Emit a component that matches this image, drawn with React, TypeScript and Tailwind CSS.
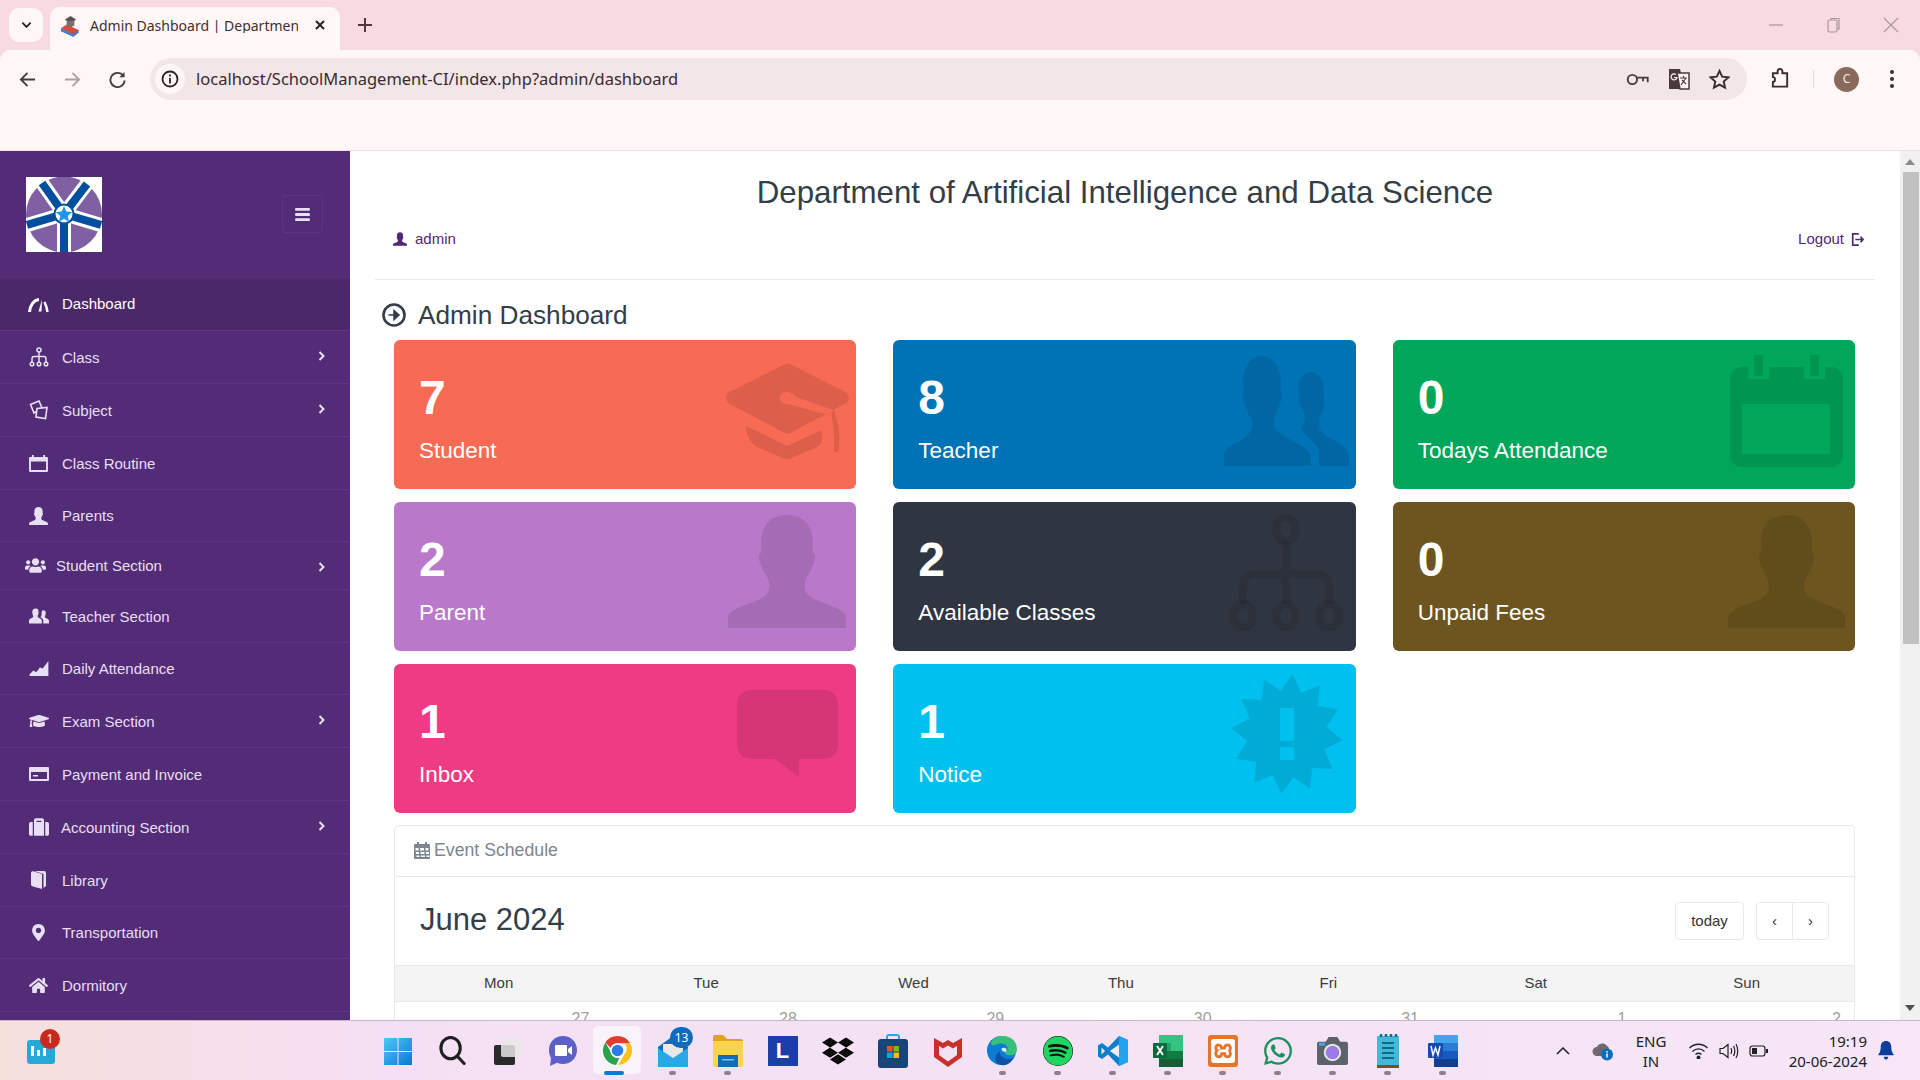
import { ReactNode } from 'react';
import { FaDropbox, FaGraduationCap, FaHome, FaMapMarkerAlt, FaSpotify, FaSuitcase, FaUsers, FaWhatsapp } from 'react-icons/fa';
import { SiXampp } from 'react-icons/si';

const person = 'M59 0C75 0 85 10 85 28C85 32 84 36 85 38C88 38 88 46 84 52C82 58 80 60 78 64C76 68 76 76 80 80C88 88 118 92 118 102V113H0V102C0 92 30 88 38 80C42 76 42 68 40 64C38 60 36 58 34 52C30 46 30 38 33 38C34 36 33 32 33 28C33 10 43 0 59 0Z';

// sidebar icons
const Gauge = () => (
  <svg viewBox="0 0 21 16" className="w-[21px] h-[16px]" fill="none" stroke="currentColor">
    <path d="M1.500 15C2 8 6 3 11 2.500" strokeWidth="3" />
    <path d="M14 2.500l-3.500 12h3z" fill="currentColor" stroke="none" />
    <path d="M16.500 5C18 8 19 11 19.500 15" strokeWidth="2.500" />
  </svg>
);

const FlowTree = () => (
  <svg viewBox="0 0 20 20" className="w-[20px] h-[20px]" fill="none" stroke="currentColor" strokeWidth="1.500">
    <circle cx="10" cy="3" r="2" />
    <circle cx="3" cy="17" r="1.800" />
    <circle cx="10" cy="17" r="1.800" />
    <circle cx="17" cy="17" r="1.800" />
    <path d="M10 5v10M3 15v-3c0-2 1-2.500 2-2.500h10c1 0 2 .5 2 2.500v3" />
  </svg>
);

const Docs = () => (
  <svg viewBox="0 0 20 20" className="w-[20px] h-[20px]" fill="none" stroke="currentColor" strokeWidth="1.600">
    <path d="M1.500 4.500L10 1l3 7-8 5z" />
    <path d="M8 8.500l10-1-1.500 11-9.500-1.500z" fill="#532c77" />
  </svg>
);

const CalendarSmall = () => (
  <svg viewBox="0 0 20 18" className="w-[19px] h-[17px]" fill="currentColor">
    <path fillRule="evenodd" d="M1 2h2V0h2v2h10V0h2v2h2a1 1 0 0 1 1 1v14a1 1 0 0 1-1 1H1a1 1 0 0 1-1-1V3a1 1 0 0 1 1-1zm1 5v9h16V7z" />
  </svg>
);

const Bust = ({ box, fill }: { box: string; fill: string }) => (
  <svg viewBox="0 0 118 113" className={box} fill={fill}>
    <path d={person} />
  </svg>
);

const Teachers = () => (
  <svg viewBox="0 0 21 16" className="w-[20px] h-[16px]" fill="currentColor">
    <path d="M7 0c2.500 0 3.500 2 3 5-.3 2-1 2.500-1 3.500 0 1.500 4.500 2 4.500 4.500v3H0v-3c0-2.500 4.500-3 4.500-4.500 0-1-.7-1.500-1-3.500C3 2 4.500 0 7 0z" />
    <path d="M15 2c2 0 3 1.500 2.500 4-.3 1.500-.8 2-.8 3 0 1.200 4.300 1.800 4.300 4v3h-6v-3c0-1.500-1-2.500-3-3.700.6-.8 1-1.500 1.200-3C13 4 13.500 2 15 2z" />
  </svg>
);

const AreaChart = () => (
  <svg viewBox="0 0 20 16" className="w-[20px] h-[15px]" fill="currentColor">
    <path d="M0 16v-2l4-4 3 2 4-5 3 1 6-8v16z" />
  </svg>
);

const CreditCard = () => (
  <svg viewBox="0 0 20 14" className="w-[20px] h-[14px]" fill="currentColor">
    <path fillRule="evenodd" d="M1 0h18a1 1 0 0 1 1 1v12a1 1 0 0 1-1 1H1a1 1 0 0 1-1-1V1a1 1 0 0 1 1-1zm1 5v7h16V5zm2 3h5v1.500H4z" />
  </svg>
);

const Book = () => (
  <svg viewBox="0 0 15 18" className="w-[15px] h-[18px]" fill="currentColor">
    <path d="M0 2C0 .5 1.500 0 3 .5L11 3v15l-9-2.500C.5 15 0 14.500 0 13z" />
    <path d="M3.500 0H13a2 2 0 0 1 2 2v13l-2.500 2V3z" />
  </svg>
);

const navItems: { label: string; icon: ReactNode; pad: string; gap: string; arrow?: string; h: string }[] = [
  { label: 'Class', icon: <FlowTree />, pad: 'pl-[28px]', gap: 'ml-[13px]', arrow: 'mb-[2px]', h: 'h-[53px]' },
  { label: 'Subject', icon: <Docs />, pad: 'pl-[28px]', gap: 'ml-[13px]', arrow: 'mb-[2px]', h: 'h-[53px]' },
  { label: 'Class Routine', icon: <CalendarSmall />, pad: 'pl-[28px]', gap: 'ml-[13px]', h: 'h-[53px]' },
  { label: 'Parents', icon: <Bust box="w-[19px] h-[18px]" fill="currentColor" />, pad: 'pl-[28px]', gap: 'ml-[13px]', h: 'h-[52px]' },
  { label: 'Student Section', icon: <FaUsers size={21} />, pad: 'pl-[25px]', gap: 'ml-[10px]', arrow: 'mt-[2px]', h: 'h-[48px]' },
  { label: 'Teacher Section', icon: <Teachers />, pad: 'pl-[28px]', gap: 'ml-[13px]', h: 'h-[53px]' },
  { label: 'Daily Attendance', icon: <AreaChart />, pad: 'pl-[28px]', gap: 'ml-[13px]', h: 'h-[52px]' },
  { label: 'Exam Section', icon: <FaGraduationCap size={20} />, pad: 'pl-[28px]', gap: 'ml-[13px]', arrow: 'mb-[2px]', h: 'h-[53px]' },
  { label: 'Payment and Invoice', icon: <CreditCard />, pad: 'pl-[28px]', gap: 'ml-[13px]', h: 'h-[53px]' },
  { label: 'Accounting Section', icon: <FaSuitcase size={20} />, pad: 'pl-[28px]', gap: 'ml-[12px]', arrow: 'mb-[2px]', h: 'h-[53px]' },
  { label: 'Library', icon: <Book />, pad: 'pl-[28px]', gap: 'ml-[13px]', h: 'h-[53px]' },
  { label: 'Transportation', icon: <FaMapMarkerAlt size={17} />, pad: 'pl-[28px]', gap: 'ml-[13px]', h: 'h-[52px]' },
  { label: 'Dormitory', icon: <FaHome size={19} />, pad: 'pl-[28px]', gap: 'ml-[13px]', h: 'h-[53px]' },
];

const Logo = () => (
  <svg viewBox="0 0 76 75" className="w-[76px] h-[75px] bg-white">
    <circle cx="38" cy="37.500" r="38" fill="#7f60a3" />
    <g stroke="#fff" strokeWidth="14">
      <path d="M38 37L14 3M38 37L63 4M38 37L-2 49M38 37L78 49M38 37V78" />
    </g>
    <g stroke="#004f9f" strokeWidth="8">
      <path d="M38 37L16 6M38 37L61 7M38 37L1 48M38 37L75 48M38 37V75" />
    </g>
    <circle cx="38" cy="37" r="10.500" fill="#004f9f" />
    <circle cx="38" cy="37" r="8.500" fill="#fff" />
    <path d="M38 29l2.300 5.600 6 .5-4.600 3.900 1.400 5.900-5.100-3.200-5.100 3.200 1.400-5.900-4.600-3.900 6-.5z" fill="#1e96f0" />
  </svg>
);

// big faded card icons, box sizes are taken from the picture
const BigPerson = ({ box }: { box: string }) => (
  <svg viewBox="0 0 118 113" className={box} preserveAspectRatio="none" fill="#000" fillOpacity="0.1">
    <path d={person} />
  </svg>
);

const BigCap = () => (
  <svg viewBox="0 0 125 96" className="absolute left-[331px] top-[23px] w-[125px] h-[96px]" fill="#000" fillOpacity="0.1">
    <path fillRule="evenodd" d="M58 2Q62.500-1 67 2L122 30Q126 35 122 40L108 47L101 51L67 69Q62.500 72 58 69L3 40Q-1 35 3 30ZM61 29C57 29 55 32 55 35C55 38 57 41 61 41C63 41 65 41 66 42L100 51L108 47L71 34C69 31 65 29 61 29Z" />
    <path d="M21 63L62 83L97 67V76C97 80 95 82 92 84L67 95Q62.500 97 58 95L32 84C25 80 21 72 21 63Z" />
    <path d="M109 47Q116 66 114 87C113 90 109 90 109 87Q110 68 106 50Z" />
  </svg>
);

const BigTeachers = () => (
  <svg viewBox="0 0 125 110" className="absolute left-[331px] top-[16px] w-[125px] h-[110px]" fill="#000" fillOpacity="0.1">
    <path d="M38 0C47 0 57 8 57 28C57 32 56 36 57 38C58 38 58 44 56 48C54 54 51 58 50 64C49 68 50 72 55 76C68 86 87 92 87 100V110H0V98C0 90 20 86 26 76C29 72 29 66 27 62C24 58 22 54 21 48C18 44 18 38 20 38C20 34 19 32 19 28C19 8 28 0 38 0Z" />
    <path d="M87 16C94 16 100 22 100 38C100 40 99 44 100 46C101 46 101 50 99 54C97 58 95 62 95 66C95 72 97 76 102 80C109 84 125 90 125 100V110H95V98C95 88 85 84 76 72C80 68 84 62 78 52C74 48 74 42 76 42C76 40 74 38 74 34C74 22 80 16 87 16Z" />
  </svg>
);

const BigCalendar = () => (
  <svg viewBox="0 0 113 112" className="absolute left-[337px] top-[15px] w-[113px] h-[112px]" fill="#000" fillOpacity="0.1">
    <path fillRule="evenodd" d="M12 12H18.500V24H39V12H74V24H95V12H101A12 12 0 0 1 113 24V100A12 12 0 0 1 101 112H12A12 12 0 0 1 0 100V24A12 12 0 0 1 12 12ZM12 49V99H100V49Z" />
    <rect x="24" y="0" width="9" height="21" />
    <rect x="80" y="0" width="9" height="21" />
  </svg>
);

const BigTree = () => (
  <svg viewBox="0 0 117 117" className="absolute left-[336px] top-[12px] w-[117px] h-[117px]" fill="none" stroke="#000" strokeOpacity="0.1" strokeWidth="8">
    <ellipse cx="57" cy="15" rx="10" ry="12" />
    <ellipse cx="14" cy="102" rx="10" ry="12" />
    <ellipse cx="57" cy="102" rx="10" ry="12" />
    <ellipse cx="100" cy="102" rx="10" ry="12" />
    <path d="M57 27V90M14 90V75C14 62 20 60 26 60H88C94 60 100 62 100 75V90" />
  </svg>
);

const BigSpeech = () => (
  <svg viewBox="0 0 101 87" className="absolute left-[343px] top-[26px] w-[101px] h-[87px]" fill="#000" fillOpacity="0.1">
    <path d="M14 0H87A14 14 0 0 1 101 14V55A14 14 0 0 1 87 69H62V87L38 69H14A14 14 0 0 1 0 55V14A14 14 0 0 1 14 0Z" />
  </svg>
);

const burstPath = (() => {
  const n = 12;
  let d = '';
  for (let i = 0; i < n; i++) {
    const a = (i / n) * Math.PI * 2 - Math.PI / 2 + 0.1;
    const b = ((i + 0.5) / n) * Math.PI * 2 - Math.PI / 2 + 0.1;
    const tip = `${(56 + 56 * Math.cos(a)).toFixed(1)} ${(60 + 60 * Math.sin(a)).toFixed(1)}`;
    const val = `${(56 + 40 * Math.cos(b)).toFixed(1)} ${(60 + 44 * Math.sin(b)).toFixed(1)}`;
    d += `${i === 0 ? 'M' : 'L'}${tip}L${val}`;
  }
  return d + 'Z';
})();

const BigBurst = () => (
  <svg viewBox="0 0 112 120" className="absolute left-[338px] top-[10px] w-[112px] h-[120px]" fill="#000" fillOpacity="0.1">
    <path fillRule="evenodd" d={`${burstPath}M49 34V67H63V34ZM49 73V86H63V73Z`} />
  </svg>
);

const cards = [
  { value: '7', label: 'Student', bg: 'bg-[#f76a54]', icon: <BigCap /> },
  { value: '8', label: 'Teacher', bg: 'bg-[#0073b7]', icon: <BigTeachers /> },
  { value: '0', label: 'Todays Attendance', bg: 'bg-[#00a65a]', icon: <BigCalendar /> },
  { value: '2', label: 'Parent', bg: 'bg-[#b978ca]', icon: <BigPerson box="absolute left-[334px] top-[13px] w-[118px] h-[113px]" /> },
  { value: '2', label: 'Available Classes', bg: 'bg-[#303641]', icon: <BigTree /> },
  { value: '0', label: 'Unpaid Fees', bg: 'bg-[#6d551f]', icon: <BigPerson box="absolute left-[335px] top-[13px] w-[117px] h-[113px]" /> },
  { value: '1', label: 'Inbox', bg: 'bg-[#ef3b84]', icon: <BigSpeech /> },
  { value: '1', label: 'Notice', bg: 'bg-[#00c0ef]', icon: <BigBurst /> },
];

const days = ['Mon', 'Tue', 'Wed', 'Thu', 'Fri', 'Sat', 'Sun'];
const dates = ['27', '28', '29', '30', '31', '1', '2'];

// taskbar icons
const WinLogo = () => (
  <svg viewBox="0 0 30 30" className="w-[30px] h-[30px]">
    <defs>
      <linearGradient id="wl" x1="0" y1="0" x2="1" y2="1">
        <stop offset="0" stopColor="#4dc8f8" />
        <stop offset="1" stopColor="#0a78d4" />
      </linearGradient>
    </defs>
    <path d="M1 2h13.500v13H1zM15.500 2H29v13H15.500zM1 16h13.500v13H1zM15.500 16H29v13H15.500z" fill="url(#wl)" />
  </svg>
);

const SearchIcon = () => (
  <svg viewBox="0 0 30 30" className="w-[29px] h-[29px]" fill="none" stroke="#202020" strokeWidth="3.200">
    <ellipse cx="13" cy="12.500" rx="10" ry="11" />
    <path d="M20 21l7 7.500" strokeLinecap="round" />
  </svg>
);

const TaskView = () => (
  <svg viewBox="0 0 30 30" className="w-[30px] h-[30px]">
    <rect x="1" y="9" width="21" height="20" rx="2" fill="#2a2a2a" />
    <rect x="8" y="1" width="21" height="20" rx="2" fill="#e8e8e8" fillOpacity="0.85" />
  </svg>
);

const Meet = () => (
  <svg viewBox="0 0 30 32" className="w-[30px] h-[32px]">
    <path d="M15 1c8 0 14 6 14 14s-6 14-14 14c-2 0-4-.4-6-1.200L2 31l1-8C1.500 20.500 1 18 1 15 1 7 7 1 15 1z" fill="#5f5fc8" />
    <path d="M8 10h10a1 1 0 0 1 1 1v9a1 1 0 0 1-1 1H8a1 1 0 0 1-1-1v-9a1 1 0 0 1 1-1zM20 14l4-3v9l-4-3z" fill="#fff" />
  </svg>
);

const Chrome = () => (
  <svg viewBox="0 0 32 32" className="w-[31px] h-[31px]">
    <path d="M16 1a15 15 0 0 1 13 7.500H16a7.500 7.500 0 0 0-7 5L3.500 7.700A15 15 0 0 1 16 1z" fill="#e33b2e" />
    <path d="M29 8.500A15 15 0 0 1 17 31l6-11a7.500 7.500 0 0 0 0-11.500z" fill="#fbc116" />
    <path d="M3.500 7.700L9 17.500a7.500 7.500 0 0 0 9 6L14.500 31A15 15 0 0 1 3.500 7.700z" fill="#2ba24c" />
    <circle cx="16" cy="16" r="7.500" fill="#fff" />
    <circle cx="16" cy="16" r="6" fill="#2a7de8" />
  </svg>
);

const Mail = () => (
  <svg viewBox="0 0 30 32" className="w-[30px] h-[32px]">
    <path d="M0 12L15 1l15 11v20H0z" fill="#0f6cbd" />
    <path d="M5 9h20v14H5z" fill="#e8e8e8" />
    <path d="M0 13l15 10 15-10v19H0z" fill="#2aa7e8" />
  </svg>
);

const Folder = () => (
  <svg viewBox="0 0 30 32" className="w-[30px] h-[32px]">
    <path d="M0 2a2 2 0 0 1 2-2h8l4 4h14a2 2 0 0 1 2 2v6H0z" fill="#e0a41a" />
    <path d="M0 6h30v24a2 2 0 0 1-2 2H2a2 2 0 0 1-2-2z" fill="#fbd44f" />
    <path d="M5 20h20v12H5z" fill="#0f6cbd" />
    <rect x="9" y="24" width="12" height="1.500" fill="#7ec3f0" />
  </svg>
);

const Store = () => (
  <svg viewBox="0 0 30 34" className="w-[30px] h-[34px]">
    <path d="M9 5V3a2 2 0 0 1 2-2h8a2 2 0 0 1 2 2v2" fill="none" stroke="#28a8ea" strokeWidth="2" />
    <rect x="0" y="5" width="30" height="29" rx="3" fill="#17457a" />
    <rect x="9" y="12" width="5.500" height="5.500" fill="#f25022" />
    <rect x="15.500" y="12" width="5.500" height="5.500" fill="#7fba00" />
    <rect x="9" y="18.500" width="5.500" height="5.500" fill="#00a4ef" />
    <rect x="15.500" y="18.500" width="5.500" height="5.500" fill="#ffb900" />
  </svg>
);

const McAfee = () => (
  <svg viewBox="0 0 28 32" className="w-[28px] h-[32px]">
    <path fillRule="evenodd" d="M0 3l9 5 5-3 5 3 9-5v19l-14 10L0 22zM5 11v9l9 6.500 9-6.500v-9l-4 2.500-5-3-5 3z" fill="#c8302c" />
  </svg>
);

const Edge = () => (
  <svg viewBox="0 0 32 32" className="w-[31px] h-[31px]">
    <circle cx="15" cy="16" r="15" fill="#0c7cd5" />
    <path d="M4 8C8 1 16 0 22 2c6 2 9 7 9 13 0 4-3 6-7 6-3 0-5-1-6-3 3-1 4-3 3-6-2-4-8-4-12-2-2 1-4 2-5-2z" fill="#36c17a" />
    <path d="M13 17c0 4 4 8 9 8 2 0 4-.5 5-1.500C25 29 20 32 15 31 8 30 6 22 13 17z" fill="#0f4fa8" />
    <path d="M15 14c3-2 6 0 5 3-2 1-5 0-5-3z" fill="#e7f2fb" />
  </svg>
);

const VsCode = () => (
  <svg viewBox="0 0 30 30" className="w-[30px] h-[30px]">
    <path d="M21 0l9 4v22l-9 4-11-11.500L4 23l-4-2.500v-11L4 7l6 4.500z" fill="#0f7fc9" />
    <path d="M21 0l9 4v22l-9 4z" fill="#21a3ef" />
    <path d="M21 8.500L12 15l9 6.500z" fill="#f2eaf4" />
    <path d="M3.500 11.500v7L7 15z" fill="#f2eaf4" />
  </svg>
);

const Excel = () => (
  <svg viewBox="0 0 30 32" className="w-[30px] h-[32px]">
    <rect x="6" y="0" width="24" height="8" fill="#33c481" />
    <rect x="6" y="8" width="12" height="8" fill="#21a366" />
    <rect x="18" y="8" width="12" height="8" fill="#33c481" />
    <rect x="6" y="16" width="24" height="8" fill="#107c41" />
    <rect x="6" y="24" width="24" height="8" fill="#185c37" />
    <rect x="0" y="8" width="14" height="15" rx="1" fill="#0b6a3a" />
    <path d="M4 11l6 9M10 11l-6 9" stroke="#fff" strokeWidth="1.800" />
  </svg>
);

const Camera = () => (
  <svg viewBox="0 0 32 30" className="w-[31px] h-[29px]">
    <path d="M2 6h7l3-5h9l3 5h6a2 2 0 0 1 2 2v20a2 2 0 0 1-2 2H2a2 2 0 0 1-2-2V8a2 2 0 0 1 2-2z" fill="#5b6269" />
    <circle cx="16" cy="17" r="9" fill="#e8e8e8" />
    <circle cx="16" cy="17" r="7" fill="#9a7be8" />
    <rect x="2" y="7" width="6" height="3" fill="#4aa8e8" />
  </svg>
);

const Notepad = () => (
  <svg viewBox="0 0 22 34" className="w-[22px] h-[34px]">
    <rect x="0" y="2" width="22" height="29" fill="#45b8d8" />
    <rect x="0" y="31" width="22" height="3" fill="#8a4a10" />
    <path d="M4 0v3M9 0v3M14 0v3M19 0v3" stroke="#0f6e8c" strokeWidth="2.500" />
    <path d="M5 9h12M5 14h12M5 19h12M5 24h12" stroke="#0c6a88" strokeWidth="2" />
  </svg>
);

const Word = () => (
  <svg viewBox="0 0 30 32" className="w-[30px] h-[32px]">
    <rect x="6" y="0" width="24" height="8" fill="#41a5ee" />
    <rect x="6" y="8" width="24" height="8" fill="#2b7cd3" />
    <rect x="6" y="16" width="24" height="8" fill="#185abd" />
    <rect x="6" y="24" width="24" height="8" fill="#103f91" />
    <rect x="0" y="8" width="15" height="15" rx="1" fill="#134bb0" />
    <path d="M3 11l2 9 2.500-7 2.500 7 2-9" stroke="#fff" strokeWidth="1.500" fill="none" />
  </svg>
);

const taskItems: { icon: ReactNode; dot?: boolean; active?: boolean; badge?: string }[] = [
  { icon: <WinLogo /> },
  { icon: <SearchIcon /> },
  { icon: <TaskView /> },
  { icon: <Meet /> },
  { icon: <Chrome />, active: true },
  { icon: <Mail />, dot: true, badge: '13' },
  { icon: <Folder />, dot: true },
  {
    icon: (
      <div className="w-[30px] h-[30px] bg-[#1b3fa8] flex items-center justify-center text-white text-[22px] font-bold font-['Liberation_Sans',sans-serif]">
        L
      </div>
    ),
  },
  { icon: <FaDropbox size={32} color="#0b0b0b" /> },
  { icon: <Store /> },
  { icon: <McAfee /> },
  { icon: <Edge />, dot: true },
  { icon: <FaSpotify size={30} color="#1ed760" className="bg-[#111] rounded-full" />, dot: true },
  { icon: <VsCode />, dot: true },
  { icon: <Excel />, dot: true },
  {
    icon: (
      <div className="w-[30px] h-[32px] bg-[#e8742a] rounded-[3px] flex items-center justify-center">
        <SiXampp size={24} color="#fff" />
      </div>
    ),
    dot: true,
  },
  { icon: <FaWhatsapp size={32} color="#1f8f5f" />, dot: true },
  { icon: <Camera />, dot: true },
  { icon: <Notepad />, dot: true },
  { icon: <Word />, dot: true },
];

const Chevron = () => (
  <svg viewBox="0 0 8 10" className="w-[8px] h-[10px]" fill="none" stroke="currentColor" strokeWidth="2">
    <path d="M1.500 1l4 4-4 4" />
  </svg>
);

const BrowserBar = () => (
  <div className="h-[151px] shrink-0 bg-[#f7dbe0] font-['Noto_Sans',sans-serif] text-[#3f2f33]">
    {/* tab strip */}
    <div className="h-[50px] flex items-end relative">
      <div className="absolute left-[9px] top-[8px] w-[34px] h-[34px] rounded-[10px] bg-[#fff7f5] flex items-center justify-center">
        <svg viewBox="0 0 12 8" className="w-[11px] h-[8px]" fill="none" stroke="#2c2024" strokeWidth="2">
          <path d="M1.500 1.500L6 6l4.500-4.500" />
        </svg>
      </div>
      <div className="ml-[50px] w-[290px] h-[43px] rounded-t-[10px] bg-[#fff7f5] flex items-center pl-[10px] pb-[6px] relative">
        <svg viewBox="0 0 22 24" className="w-[21px] h-[23px] shrink-0">
          <path d="M1 15l13 7 6-5-13-6z" fill="#d94a3a" />
          <path d="M1 18l13 6 6-5-1-2-5 4-13-6z" fill="#4a7ac8" />
          <path d="M11 2l6 4-6 3-6-3z" fill="#55504f" />
          <path d="M7 7h8v5l-4 2-4-2z" fill="#77706e" />
        </svg>
        <div className="ml-[9px] w-[208px] overflow-hidden whitespace-nowrap text-[14px] leading-none">
          Admin Dashboard | Department of
        </div>
        <svg viewBox="0 0 12 12" className="absolute left-[264px] top-[12px] w-[12px] h-[12px]" stroke="#2c2024" strokeWidth="2">
          <path d="M2 2l8 8M10 2l-8 8" />
        </svg>
      </div>
      <svg viewBox="0 0 14 14" className="absolute left-[358px] top-[18px] w-[14px] h-[14px]" stroke="#4a3a3e" strokeWidth="2">
        <path d="M7 0v14M0 7h14" />
      </svg>
      <svg viewBox="0 0 130 16" className="absolute right-[21px] top-[17px] w-[130px] h-[16px]" fill="none" stroke="#a8979b" strokeWidth="1.200">
        <path d="M0 8h14" />
        <rect x="59" y="3" width="9" height="12" rx="1.500" />
        <path d="M62 3V1.500h8V12h-2" />
        <path d="M115 1l14 14M129 1l-14 14" />
      </svg>
    </div>
    {/* toolbar */}
    <div className="h-[101px] bg-[#fff7f5] rounded-t-[10px] border-b border-[#f5dde0] relative">
      <div className="h-[58px] flex items-center">
        <svg viewBox="0 0 18 18" className="ml-[19px] w-[17px] h-[17px]" fill="none" stroke="#4a3a3e" strokeWidth="2">
          <path d="M17 9H2M9 2L2 9l7 7" />
        </svg>
        <svg viewBox="0 0 18 18" className="ml-[28px] w-[17px] h-[17px]" fill="none" stroke="#ad9fa2" strokeWidth="2">
          <path d="M1 9h15M9 2l7 7-7 7" />
        </svg>
        <svg viewBox="0 0 18 18" className="ml-[28px] w-[17px] h-[17px]" fill="none" stroke="#4a3a3e" strokeWidth="2">
          <path d="M15 5A7.500 7.500 0 1 0 16.500 10" />
          <path d="M16.500 1v5.500H11z" fill="#4a3a3e" stroke="none" />
        </svg>
        <div className="ml-[24px] w-[1597px] h-[42px] rounded-full bg-[#f3e6e9] flex items-center pl-[5px] pr-[17px]">
          <div className="w-[30px] h-[30px] rounded-full bg-[#fff7f5] flex items-center justify-center shrink-0">
            <svg viewBox="0 0 18 18" className="w-[18px] h-[18px]" fill="none" stroke="#2c2024" strokeWidth="1.800">
              <circle cx="9" cy="9" r="7.500" />
              <path d="M9 8v5.500M9 4.500v2" />
            </svg>
          </div>
          <span className="ml-[11px] text-[16.500px] leading-none whitespace-nowrap text-[#3a2b2f]">
            localhost/SchoolManagement-CI/index.php?admin/dashboard
          </span>
          <svg viewBox="0 0 24 14" className="ml-auto w-[23px] h-[13px]" fill="none" stroke="#4a3a3e" strokeWidth="2">
            <circle cx="6.500" cy="7" r="5" />
            <path d="M11 5h12v5M18 5v4" />
          </svg>
          <svg viewBox="0 0 22 22" className="ml-[19px] w-[22px] h-[22px]">
            <path d="M1 1h11l5 20H1z" fill="#4a3a3e" />
            <path d="M9 5h12v16H12z" fill="#fff7f5" stroke="#4a3a3e" strokeWidth="1.500" />
            <path d="M12 10h7M15.500 8v2M13 17l5-7M14 12l4 4" stroke="#4a3a3e" strokeWidth="1.200" fill="none" />
            <path d="M8 6.500a3 3 0 1 0 1 3H6" stroke="#fff7f5" strokeWidth="1.200" fill="none" />
          </svg>
          <svg viewBox="0 0 22 22" className="ml-[19px] w-[21px] h-[21px]" fill="none" stroke="#3a2b2f" strokeWidth="2">
            <path d="M11 2l2.800 6 6.500.7-4.900 4.400 1.400 6.400L11 16.300 5.200 19.500l1.400-6.400L1.700 8.700 8.200 8z" />
          </svg>
        </div>
        <svg viewBox="0 0 22 22" className="ml-[23px] w-[21px] h-[22px]" fill="none" stroke="#3a2b2f" strokeWidth="2">
          <path d="M3 5h5V3a2.500 2.500 0 0 1 5 0v2h5v14H3v-5c3 0 3-5 0-5z" />
        </svg>
        <div className="ml-[22px] w-px h-[18px] bg-[#f0d5da]" />
        <div className="ml-[20px] w-[25px] h-[25px] rounded-full bg-[#8b6a5e] text-[#f5ebe6] flex items-center justify-center text-[12px]">
          C
        </div>
        <svg viewBox="0 0 4 18" className="ml-[31px] w-[4px] h-[18px]" fill="#3a2b2f">
          <circle cx="2" cy="2" r="2" />
          <circle cx="2" cy="9" r="2" />
          <circle cx="2" cy="16" r="2" />
        </svg>
      </div>
    </div>
  </div>
);

const Sidebar = () => (
  <aside className="w-[350px] shrink-0 bg-[#532c77] font-['Liberation_Sans',sans-serif] text-[15px] text-[#e8dff2] overflow-hidden">
    <div className="h-[128px] flex items-start">
      <div className="ml-[26px] mt-[26px]">
        <Logo />
      </div>
      <div className="ml-[180px] mt-[44px] w-[41px] h-[38px] border border-[#5f3488] rounded-[4px] flex items-center justify-center">
        <svg viewBox="0 0 16 14" className="w-[17px] h-[13px]" fill="#e8dff2">
          <rect y="0" width="16" height="3" rx="1" />
          <rect y="5.500" width="16" height="3" rx="1" />
          <rect y="11" width="16" height="3" rx="1" />
        </svg>
      </div>
    </div>
    <div className="h-[52px] bg-[#4a2869] border-b border-[#5f3488] flex items-center pl-[28px] text-white">
      <span className="w-[21px] flex justify-center">
        <Gauge />
      </span>
      <span className="ml-[13px]">Dashboard</span>
    </div>
    {navItems.map((item) => (
      <div key={item.label} className={`${item.h} ${item.pad} border-b border-[#5f3488] flex items-center`}>
        <span className="w-[21px] flex justify-center">{item.icon}</span>
        <span className={`${item.gap} pt-[2px]`}>{item.label}</span>
        {item.arrow && (
          <span className={`ml-auto mr-[24px] ${item.arrow}`}>
            <Chevron />
          </span>
        )}
      </div>
    ))}
  </aside>
);

const MainPanel = () => (
  <main className="flex-1 min-w-0 bg-white overflow-hidden font-['Liberation_Sans',sans-serif] text-[#333e48]">
    <div className="mx-[25px] h-[129px] border-b border-[#e9e9e9] pt-[24px]">
      <h1 className="text-[31.250px] leading-[36px] text-center whitespace-nowrap">
        Department of Artificial Intelligence and Data Science
      </h1>
      <div className="mt-[18px] pl-[18px] pr-[11px] h-[20px] flex items-center justify-between text-[15px] text-[#4f2a74]">
        <span className="flex items-center gap-[8px]">
          <Bust box="w-[14px] h-[14px]" fill="#4f2a74" />
          admin
        </span>
        <span className="flex items-center gap-[7px]">
          Logout
          <svg viewBox="0 0 15 15" className="w-[13px] h-[15px]" fill="none" stroke="#4f2a74" strokeWidth="2">
            <path d="M9 1H2v13h7M5 7.500h9M11 4.500l3 3-3 3" />
          </svg>
        </span>
      </div>
    </div>
    <div className="mt-[17px] ml-[32px] h-[36px] flex items-center gap-[12px]">
      <svg viewBox="0 0 24 24" className="w-[24px] h-[24px]" fill="none" stroke="#333e48" strokeWidth="2.600">
        <circle cx="12" cy="12" r="10.500" />
        <path d="M6.500 12H13M12 7.500l5 4.500-5 4.500z" fill="#333e48" strokeWidth="1.500" />
      </svg>
      <h2 className="text-[26.200px] leading-none">Admin Dashboard</h2>
    </div>
    <div className="mt-[7px] ml-[44px] mr-[45px] grid grid-cols-3 gap-x-[37px] gap-y-[13px]">
      {cards.map((card) => (
        <div key={card.label} className={`${card.bg} relative h-[149px] rounded-[6px] overflow-hidden text-white`}>
          {card.icon}
          <div className="absolute left-[25px] top-[31px] text-[48px] leading-[54px] font-bold">{card.value}</div>
          <div className="absolute left-[25px] top-[96px] text-[22.500px] leading-[30px]">{card.label}</div>
        </div>
      ))}
    </div>
    <div className="mt-[12px] ml-[44px] mr-[45px] border border-[#e9e9e9] rounded-t-[5px]">
      <div className="h-[51px] border-b border-[#e9e9e9] flex items-center pl-[19px] pb-[2px] gap-[4px] text-[17.700px] text-[#7d8590]">
        <svg viewBox="0 0 16 18" className="w-[16px] h-[18px]" fill="#7d8590">
          <path fillRule="evenodd" d="M1 3h2V1h2v2h6V1h2v2h2a1 1 0 0 1 1 1v13a1 1 0 0 1-1 1H1a1 1 0 0 1-1-1V4a1 1 0 0 1 1-1zm.5 4v2.500h3V7zm4.500 0v2.500h4V7zm5.500 0v2.500h3V7zm-9.500 4v2h3v-2zm4.500 0v2h4v-2zm5.500 0v2h3v-2zm-9.500 3.500V16h3v-1.500zm4.500 0V16h4v-1.500zm5.500 0V16h3v-1.500z" />
        </svg>
        Event Schedule
      </div>
      <div className="h-[88px] pl-[25px] pr-[25px] pt-[25px] flex items-start">
        <div className="text-[31px] leading-[38px] mt-[-1px]">June 2024</div>
        <button className="ml-auto w-[69px] h-[38px] border border-[#e9e9e9] rounded-[4px] text-[15px] text-[#333]">
          today
        </button>
        <div className="ml-[12px] w-[73px] h-[38px] border border-[#e9e9e9] rounded-[4px] flex text-[15px] text-[#333]">
          <span className="w-[36px] border-r border-[#e9e9e9] flex items-center justify-center">‹</span>
          <span className="flex-1 flex items-center justify-center">›</span>
        </div>
      </div>
      <div className="h-[37px] bg-[#f4f4f4] border-y border-[#e9e9e9] grid grid-cols-[repeat(6,207.400px)_1fr] items-center text-[15px] text-center text-[#3b3b3b]">
        {days.map((day) => (
          <div key={day}>{day}</div>
        ))}
      </div>
      <div className="grid grid-cols-[repeat(6,207.400px)_1fr] pt-[8px] text-[16px] leading-[18px] text-[#a0a0a0] text-right">
        {dates.map((date) => (
          <div key={date} className="pr-[13px]">
            {date}
          </div>
        ))}
      </div>
    </div>
  </main>
);

const Scrollbar = () => (
  <div className="w-[20px] shrink-0 bg-[#f1f1f1] flex flex-col items-center">
    <svg viewBox="0 0 10 6" className="mt-[8px] w-[10px] h-[6px]" fill="#8a8a8a">
      <path d="M5 0l5 6H0z" />
    </svg>
    <div className="mt-[7px] ml-[1px] w-[16px] h-[472px] bg-[#c1c1c1]" />
    <svg viewBox="0 0 10 6" className="mt-auto mb-[9px] w-[10px] h-[6px]" fill="#505050">
      <path d="M0 0h10L5 6z" />
    </svg>
  </div>
);

const Taskbar = () => (
  <footer className="h-[60px] shrink-0 border-t border-[#c9b5c8] bg-[linear-gradient(90deg,#f6e0dc,#f5dff4_20%,#f3e3f3_60%,#f6e6f8)] flex items-start relative font-['Noto_Sans',sans-serif] text-[#202020]">
    <div className="absolute left-[27px] top-[19px] w-[28px] h-[24px] rounded-[3px] bg-[#27a9d8] flex items-end gap-[3px] px-[4px] pb-[8px]">
      <span className="w-[3px] h-[10px] bg-white" />
      <span className="w-[3px] h-[6px] bg-white" />
      <span className="w-[3px] h-[8px] bg-white" />
    </div>
    <div className="absolute left-[40px] top-[8px] w-[20px] h-[20px] rounded-full bg-[#c92a1e] text-white text-[12px] flex items-center justify-center">
      1
    </div>
    <div className="ml-[370px] flex">
      {taskItems.map((item, i) => (
        <div key={i} className="relative w-[55px] h-[59px] flex items-center justify-center">
          {item.active && <div className="absolute left-[3px] top-[5px] w-[48px] h-[48px] rounded-[5px] bg-white/60" />}
          <div className="relative flex items-center justify-center">{item.icon}</div>
          {item.active && <div className="absolute left-[14px] bottom-[5px] w-[20px] h-[4px] rounded-full bg-[#0f78d4]" />}
          {item.dot && <div className="absolute left-[24px] bottom-[5px] w-[7px] h-[4px] rounded-full bg-[#8e7f8e]" />}
          {item.badge && (
            <div className="absolute left-[25px] top-[6px] w-[23px] h-[21px] rounded-full bg-[#0f6cbd] text-white text-[12px] flex items-center justify-center">
              {item.badge}
            </div>
          )}
        </div>
      ))}
    </div>
    <div className="ml-[86px] h-[59px] flex items-center">
      <svg viewBox="0 0 14 8" className="w-[14px] h-[8px]" fill="none" stroke="#202020" strokeWidth="1.500">
        <path d="M1 7l6-6 6 6" />
      </svg>
      <svg viewBox="0 0 22 20" className="ml-[22px] w-[22px] h-[20px]">
        <path d="M5 15a4.500 4.500 0 0 1 0-9c1-3 6-5 9-2 2 1 3 3 3 4v7z" fill="#6e6a70" />
        <circle cx="15" cy="13.500" r="6" fill="#0f6cbd" />
        <path d="M15 12.500v4M15 10v1.500" stroke="#fff" strokeWidth="1.500" />
      </svg>
      <div className="ml-[14px] w-[46px] text-center text-[15px] leading-[20px]">
        <div>ENG</div>
        <div>IN</div>
      </div>
      <svg viewBox="0 0 20 16" className="ml-[14px] w-[21px] h-[16px]" fill="none" stroke="#202020" strokeWidth="1.300">
        <path d="M1 5c5-5 13-5 18 0M4 8.500c3.500-3.500 8.500-3.500 12 0M7 11.500c1.800-1.500 4.200-1.500 6 0" />
        <circle cx="10" cy="14.500" r="1.300" fill="#202020" />
      </svg>
      <svg viewBox="0 0 20 16" className="ml-[10px] w-[20px] h-[16px]" fill="none" stroke="#202020" strokeWidth="1.200">
        <path d="M1 5.500h3L9 1.500v13L4 10.500H1zM12 5c1 2 1 4 0 6M14.500 3c1.600 3 1.600 7 0 10M17 1c2.300 4 2.300 10 0 14" />
      </svg>
      <svg viewBox="0 0 20 12" className="ml-[10px] w-[20px] h-[12px]" fill="none" stroke="#202020" strokeWidth="1.200">
        <rect x="1" y="1" width="15" height="10" rx="2.500" />
        <rect x="3" y="3" width="5" height="6" fill="#202020" stroke="none" />
        <path d="M18 4v4" strokeWidth="2" />
      </svg>
      <div className="ml-[19px] w-[79px] text-right text-[15px] leading-[20px]">
        <div>19:19</div>
        <div>20-06-2024</div>
      </div>
      <svg viewBox="0 0 16 20" className="ml-[11px] w-[16px] h-[19px]" fill="#0b3d9c">
        <path d="M8 0c3.500 0 5.500 2.500 5.500 6 0 4 1 6 2.500 8v1H0v-1c1.500-2 2.500-4 2.500-8C2.500 2.500 4.500 0 8 0zM5.500 16.500h5C10 18.500 9 19.500 8 19.500s-2-1-2.500-3z" />
      </svg>
    </div>
  </footer>
);

const App = () => {
  return (
    <div className="h-screen w-full flex flex-col overflow-hidden">
      <BrowserBar />
      <div className="flex-1 min-h-0 flex">
        <Sidebar />
        <MainPanel />
        <Scrollbar />
      </div>
      <Taskbar />
    </div>
  );
};

export default App;
